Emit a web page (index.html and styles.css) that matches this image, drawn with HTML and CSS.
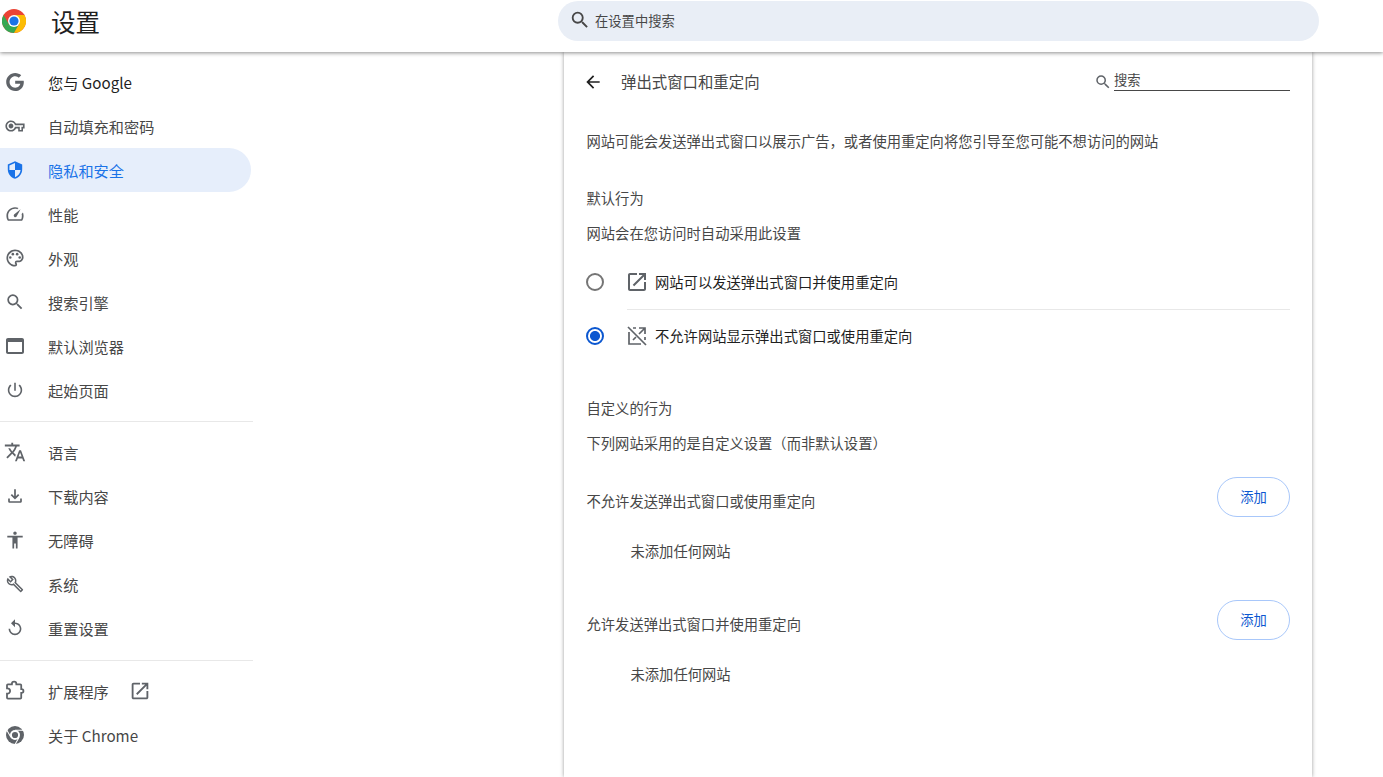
FILE: index.html
```html
<!DOCTYPE html>
<html lang="zh-CN">
<head>
  <meta charset="UTF-8" />
  <title>设置</title>
  <link rel="stylesheet" href="styles.css">
</head>
<body>
  <header class="topbar">
    <div class="brand">
      <svg class="chrome-logo" viewBox="0 0 24 24">
        <circle cx="12" cy="12" r="12" fill="#ea4335"/>
        <path d="M12 12 1.6 18A12 12 0 0 1 1.6 6l5.2 9z" fill="#34a853"/>
        <path d="M1.6 18 6.8 15 12 12l5.2 3-5.2 9A12 12 0 0 1 1.6 18z" fill="#34a853"/>
        <path d="M12 6h10.4A12 12 0 0 1 12 24l5.2-9z" fill="#fbbc04"/>
        <circle cx="12" cy="12" r="6" fill="#fff"/>
        <circle cx="12" cy="12" r="4.6" fill="#1a73e8"/>
      </svg>
      <h1>设置</h1>
    </div>
    <div class="search">
      <svg class="icon" viewBox="0 0 24 24"><path d="M15.5 14h-.79l-.28-.27A6.471 6.471 0 0 0 16 9.5 6.5 6.5 0 1 0 9.5 16c1.61 0 3.09-.59 4.23-1.57l.27.28v.79l5 4.99L20.49 19l-4.99-5zm-6 0C7.01 14 5 11.99 5 9.5S7.01 5 9.5 5 14 7.01 14 9.5 11.99 14 9.5 14z"/></svg>
      <span>在设置中搜索</span>
    </div>
  </header>

  <div class="layout">
    <nav class="sidebar">
      <a class="nav-item strong">
        <svg class="icon" viewBox="-4 -4 32 32"><path d="M12.24 10.285V14.4h6.806c-.275 1.765-2.056 5.174-6.806 5.174-4.095 0-7.439-3.389-7.439-7.574s3.345-7.574 7.439-7.574c2.33 0 3.891.989 4.785 1.849l3.254-3.138C18.189 1.186 15.479 0 12.24 0c-6.635 0-12 5.365-12 12s5.365 12 12 12c6.926 0 11.52-4.869 11.52-11.726 0-.788-.085-1.39-.189-1.989H12.24z"/></svg>
        <span>您与 Google</span>
      </a>
      <a class="nav-item">
        <svg class="icon" viewBox="-3 -3 30 30"><path d="M22 19h-6v-4h-2.68c-1.14 2.42-3.6 4-6.32 4-3.86 0-7-3.14-7-7s3.14-7 7-7c2.72 0 5.17 1.58 6.32 4H24v6h-2v4zm-4-2h2v-4h2v-2H11.94l-.23-.67C11.01 8.34 9.11 7 7 7c-2.76 0-5 2.24-5 5s2.24 5 5 5c2.11 0 4.01-1.34 4.71-3.33l.23-.67H18v4zM7 15c-1.65 0-3-1.35-3-3s1.35-3 3-3 3 1.35 3 3-1.35 3-3 3z"/></svg>
        <span>自动填充和密码</span>
      </a>
      <a class="nav-item active">
        <svg class="icon" viewBox="-3 -3 30 30"><path d="M12 1 3 5v6c0 5.55 3.84 10.74 9 12 5.16-1.26 9-6.45 9-12V5l-9-4zm0 10.99h7c-.53 4.12-3.28 7.79-7 8.94V12H5V6.3l7-3.11v8.8z"/></svg>
        <span>隐私和安全</span>
      </a>
      <a class="nav-item">
        <svg class="icon" viewBox="-2 -2 28 28"><path d="M12 4C6.500 4 2 8.500 2 14c0 1.500.3 3.300.9 4.500l.8 1.500h16.600l.8-1.500c.6-1.200.9-3 .9-4.500 0-1.300-.3-2.600-.7-3.700l-1.600 1.600c.2.700.3 1.400.3 2.100 0 1.300-.2 2.500-.7 4H4.700c-.5-1.500-.7-2.700-.7-4 0-4.400 3.600-8 8-8 .9 0 1.800.2 2.600.5l1.500-1.500C15 4.300 13.500 4 12 4zm6.500 2.500-7.600 6a2 2 0 0 0 2.800 2.800l4.800-8.800z"/></svg>
        <span>性能</span>
      </a>
      <a class="nav-item">
        <svg class="icon" viewBox="-2 -2 28 28"><path d="M12 22C6.490 22 2 17.510 2 12S6.490 2 12 2s10 4.040 10 9c0 3.310-2.690 6-6 6h-1.770c-.28 0-.5.22-.5.5 0 .12.05.23.13.33.41.47.64 1.060.64 1.670A2.500 2.500 0 0 1 12 22zm0-18c-4.410 0-8 3.590-8 8s3.590 8 8 8c.28 0 .5-.22.5-.5a.54.54 0 0 0-.14-.35c-.41-.46-.63-1.050-.63-1.650a2.500 2.500 0 0 1 2.500-2.500H16c2.210 0 4-1.790 4-4 0-3.860-3.590-7-8-7z"/><circle cx="6.500" cy="11.500" r="1.500"/><circle cx="9.500" cy="7.500" r="1.500"/><circle cx="14.500" cy="7.500" r="1.500"/><circle cx="17.500" cy="11.500" r="1.500"/></svg>
        <span>外观</span>
      </a>
      <a class="nav-item">
        <svg class="icon" viewBox="-2 -2 28 28"><path d="M15.5 14h-.79l-.28-.27A6.471 6.471 0 0 0 16 9.5 6.5 6.5 0 1 0 9.5 16c1.61 0 3.09-.59 4.23-1.57l.27.28v.79l5 4.99L20.49 19l-4.99-5zm-6 0C7.01 14 5 11.99 5 9.5S7.01 5 9.5 5 14 7.01 14 9.5 11.99 14 9.5 14z"/></svg>
        <span>搜索引擎</span>
      </a>
      <a class="nav-item">
        <svg class="icon" viewBox="0 0 24 24"><path d="M19 4H5c-1.110 0-2 .9-2 2v12c0 1.100.89 2 2 2h14c1.100 0 2-.9 2-2V6c0-1.100-.89-2-2-2zm0 14H5V8h14v10z"/></svg>
        <span>默认浏览器</span>
      </a>
      <a class="nav-item">
        <svg class="icon" viewBox="-3 -3 30 30"><path d="M13 3h-2v10h2V3zm4.830 2.170-1.420 1.420C17.990 7.860 19 9.810 19 12c0 3.870-3.130 7-7 7s-7-3.130-7-7c0-2.190 1.010-4.140 2.580-5.420L6.170 5.170C4.230 6.820 3 9.260 3 12c0 4.970 4.030 9 9 9s9-4.030 9-9c0-2.740-1.230-5.180-3.170-6.830z"/></svg>
        <span>起始页面</span>
      </a>
      <hr class="nav-sep">
      <a class="nav-item">
        <svg class="icon" viewBox="-1 -1 26 26"><path d="m12.870 15.070-2.540-2.510.03-.03c1.740-1.940 2.980-4.170 3.710-6.530H17V4h-7V2H8v2H1v1.990h11.170C11.500 7.920 10.440 9.750 9 11.350 8.070 10.320 7.300 9.190 6.690 8h-2c.73 1.630 1.730 3.170 2.980 4.560l-5.090 5.020L4 19l5-5 3.110 3.110.76-2.040zM18.500 10h-2L12 22h2l1.120-3h4.750L21 22h2l-4.500-12zm-2.620 7 1.620-4.330L19.120 17h-3.240z"/></svg>
        <span>语言</span>
      </a>
      <a class="nav-item">
        <svg class="icon" viewBox="-2 -2 28 28"><path d="M18 15v3H6v-3H4v3c0 1.100.9 2 2 2h12c1.100 0 2-.9 2-2v-3h-2zm-1-4-1.410-1.410L13 12.170V4h-2v8.170L8.410 9.590 7 11l5 5 5-5z"/></svg>
        <span>下载内容</span>
      </a>
      <a class="nav-item">
        <svg class="icon" viewBox="-2 -2 28 28"><path d="M12 2c1.100 0 2 .9 2 2s-.9 2-2 2-2-.9-2-2 .9-2 2-2zm9 7h-6v13h-2v-6h-2v6H9V9H3V7h18v2z"/></svg>
        <span>无障碍</span>
      </a>
      <a class="nav-item">
        <svg class="icon" viewBox="-4 -4 32 32"><path d="m22.610 18.990-9.080-9.080c.93-2.340.45-5.100-1.440-7C9.790.61 6.210.4 3.660 2.250L7.500 6.100 6.080 7.500 2.250 3.690C.39 6.230.6 9.820 2.900 12.110c1.860 1.860 4.570 2.350 6.890 1.480l9.110 9.110c.39.39 1.020.39 1.410 0l2.300-2.300c.4-.38.4-1.010 0-1.410zm-3 1.600-9.460-9.460c-.61.45-1.290.72-2 .82-1.360.2-2.790-.21-3.830-1.250C3.370 9.760 2.930 8.500 3 7.260l3.090 3.090 4.240-4.240-3.090-3.090c1.240-.07 2.490.37 3.440 1.310 1.080 1.080 1.490 2.570 1.240 3.960-.12.71-.42 1.370-.88 1.960l9.450 9.450-.88.890z"/></svg>
        <span>系统</span>
      </a>
      <a class="nav-item">
        <svg class="icon" viewBox="-3 -3 30 30"><path d="M12 5V1L7 6l5 5V7c3.310 0 6 2.690 6 6s-2.690 6-6 6-6-2.690-6-6H4c0 4.420 3.580 8 8 8s8-3.580 8-8-3.580-8-8-8z"/></svg>
        <span>重置设置</span>
      </a>
      <hr class="nav-sep low">
      <a class="nav-item">
        <svg class="icon" viewBox="-1.500 -1 27 27"><path class="outline" d="M8.500 5V4.500a2.500 2.500 0 0 1 5 0V5H18a1 1 0 0 1 1 1v4.500h.5a2 2 0 0 1 0 4H19V20a1 1 0 0 1-1 1H4a1 1 0 0 1-1-1v-4.500h.5a3 3 0 0 0 0-6H3V6a1 1 0 0 1 1-1z"/></svg>
        <span>扩展程序</span>
        <svg class="icon external" viewBox="-1 -1 26 26"><path d="M19 19H5V5h7V3H5c-1.110 0-2 .89-2 2v14c0 1.100.89 2 2 2h14c1.100 0 2-.9 2-2v-7h-2v7zM14 3v2h3.590l-9.830 9.830 1.410 1.410L19 6.410V10h2V3h-7z"/></svg>
      </a>
      <a class="nav-item">
        <svg class="icon" viewBox="-2 -2 28 28"><circle cx="12" cy="12" r="10.500"/><circle cx="12" cy="12" r="5.800" fill="#fff"/><circle cx="12" cy="12" r="3.600"/><path class="cut" d="M12 6.500h9.500M7.200 14.700 2.500 6.500M16.800 14.700 12 23"/></svg>
        <span>关于 Chrome</span>
      </a>
    </nav>

    <main class="card">
      <div class="sub-head">
        <svg class="back" viewBox="0 0 24 24"><path d="M20 11H7.830l5.590-5.590L12 4l-8 8 8 8 1.410-1.410L7.830 13H20v-2z"/></svg>
        <h2>弹出式窗口和重定向</h2>
        <div class="sub-search">
          <svg class="icon" viewBox="0 0 24 24"><path d="M15.500 14h-.79l-.28-.27A6.471 6.471 0 0 0 16 9.500 6.500 6.500 0 1 0 9.500 16c1.610 0 3.090-.59 4.230-1.570l.27.28v.79l5 4.990L20.490 19l-4.990-5zm-6 0C7.010 14 5 11.990 5 9.500S7.010 5 9.500 5 14 7.010 14 9.500 11.990 14 9.500 14z"/></svg>
          <div class="sub-input">搜索</div>
        </div>
      </div>

      <p class="desc">网站可能会发送弹出式窗口以展示广告，或者使用重定向将您引导至您可能不想访问的网站</p>

      <div class="line section-top">默认行为</div>
      <div class="line">网站会在您访问时自动采用此设置</div>

      <div class="radios">
        <label class="radio-row divided">
          <span class="radio"></span>
          <svg class="icon" viewBox="0 0 24 24"><path d="M19 19H5V5h7V3H5c-1.110 0-2 .89-2 2v14c0 1.100.89 2 2 2h14c1.100 0 2-.9 2-2v-7h-2v7zM14 3v2h3.590l-9.830 9.830 1.410 1.410L19 6.410V10h2V3h-7z"/></svg>
          <span class="radio-text">网站可以发送弹出式窗口并使用重定向</span>
        </label>
        <label class="radio-row">
          <span class="radio checked"></span>
          <svg class="icon" viewBox="0 0 24 24"><path class="blocked" d="M3 3l18 18M4 8v12h12M20 13v3M8 4h3M14 4h6v6M20 4l-6 6M11 13l-3 3"/></svg>
          <span class="radio-text">不允许网站显示弹出式窗口或使用重定向</span>
        </label>
      </div>

      <div class="line custom-top">自定义的行为</div>
      <div class="line">下列网站采用的是自定义设置（而非默认设置）</div>

      <div class="list-head first">
        <span>不允许发送弹出式窗口或使用重定向</span>
        <button class="add-btn">添加</button>
      </div>
      <div class="empty">未添加任何网站</div>

      <div class="list-head">
        <span>允许发送弹出式窗口并使用重定向</span>
        <button class="add-btn">添加</button>
      </div>
      <div class="empty">未添加任何网站</div>
    </main>
  </div>
</body>
</html>
```

FILE: styles.css
```css
* {
  box-sizing: border-box;
  margin: 0;
  padding: 0;
}

html, body {
  height: 100%;
  overflow: hidden;
  background: #fff;
  color: #474747;
  font-family: "Noto Sans CJK SC", "Noto Sans", sans-serif;
}

.icon {
  width: 24px;
  height: 24px;
  flex: none;
  fill: #5f6368;
}

.topbar {
  position: relative;
  z-index: 2;
  height: 52px;
  display: flex;
  align-items: flex-start;
  background: #fff;
  box-shadow: 0 1px 4px rgba(0, 0, 0, 0.45);
}

.brand {
  width: 558px;
  display: flex;
  align-items: center;
  height: 42px;
  padding-left: 2px;
}

.chrome-logo {
  width: 24px;
  height: 24px;
}

h1 {
  margin-left: 25px;
  font-size: 24.5px;
  font-weight: 400;
  color: #1f1f1f;
}

.search {
  width: 761px;
  height: 40px;
  margin-top: 1px;
  padding: 0 0 2px 11px;
  display: flex;
  align-items: center;
  gap: 4px;
  border-radius: 20px;
  background: #e9eef6;
  font-size: 13.3px;
}

.search .icon {
  width: 22px;
  height: 22px;
  fill: #474747;
}

.layout {
  display: flex;
  height: calc(100% - 52px);
}

.sidebar {
  width: 253px;
  flex: none;
  padding-top: 8px;
}

.nav-item {
  height: 44px;
  display: flex;
  align-items: center;
  width: 251px;
  padding-left: 3px;
  font-size: 15.2px;
  border-radius: 0 22px 22px 0;
}

.nav-item > span {
  margin-left: 21px;
}

.nav-item .icon {
  margin-top: -1px;
}

.nav-item.strong {
  color: #1f1f1f;
}

.nav-item.active {
  background: #e6eefb;
  color: #1a73e8;
}

.nav-item.active .icon {
  fill: #1a73e8;
}

.nav-item .external {
  margin-left: 19px;
}

.outline {
  fill: none;
  stroke: #5f6368;
  stroke-width: 2;
}

.blocked {
  fill: none;
  stroke: #5f6368;
  stroke-width: 1.7;
}

.cut {
  fill: none;
  stroke: #fff;
  stroke-width: 1.2;
}

.nav-sep {
  border: 0;
  border-top: 1px solid #e8e8e8;
  margin: 9px 0 8px;
}

.nav-sep.low {
  margin-top: 10px;
}

.card {
  width: 748px;
  margin-left: 311px;
  padding: 0 22px;
  background: #fff;
  box-shadow: 0 0 4px rgba(0, 0, 0, 0.4);
  font-size: 14.3px;
}

.sub-head {
  height: 60px;
  display: flex;
  align-items: center;
}

.back {
  width: 20px;
  height: 20px;
  margin-left: -3px;
  fill: #1f1f1f;
}

h2 {
  margin-left: 18px;
  padding-bottom: 2px;
  font-size: 15.4px;
  font-weight: 400;
}

.sub-search {
  margin-left: auto;
  display: flex;
  align-items: center;
  gap: 2px;
}

.sub-search .icon {
  width: 18px;
  height: 18px;
}

.sub-input {
  width: 176px;
  height: 20px;
  line-height: 17px;
  font-size: 13.3px;
  border-bottom: 1px solid #474747;
  margin-top: -2px;
}

.desc {
  height: 60px;
  line-height: 58px;
  padding-left: 0.5px;
}

.line {
  height: 34px;
  line-height: 32px;
  padding-left: 0.5px;
}

.section-top {
  margin-top: 10px;
  margin-bottom: 1px;
}

.radios {
  margin-top: 4px;
}

.radio-row {
  height: 54px;
  display: flex;
  align-items: center;
  color: #1f1f1f;
  position: relative;
}

.radio-row .icon {
  margin-left: 21px;
  margin-right: 6px;
}

.radio-text {
  padding-bottom: 2px;
}

.radio-row.divided::after {
  content: '';
  position: absolute;
  left: 41px;
  right: 0;
  bottom: -1px;
  height: 1px;
  background: #e8e8e8;
}

.radio {
  width: 18px;
  height: 18px;
  flex: none;
  border: 2px solid #757575;
  border-radius: 50%;
}

.radio.checked {
  border-color: #0b57d0;
  background: radial-gradient(circle, #0b57d0 0 4.6px, #fff 5.4px);
}

.custom-top {
  margin-top: 29px;
  margin-bottom: 1px;
}

.list-head {
  display: flex;
  justify-content: space-between;
  align-items: center;
  margin-top: 28px;
}

.list-head.first {
  margin-top: 16px;
}

.list-head span {
  padding: 6px 0 0 0.5px;
}

.add-btn {
  width: 73px;
  height: 40px;
  padding-bottom: 2px;
  background: #fff;
  border: 1px solid #a8c7fa;
  border-radius: 20px;
  color: #0b57d0;
  font: inherit;
  font-size: 13.3px;
}

.empty {
  height: 40px;
  line-height: 38px;
  margin-top: 15px;
  padding-left: 44.5px;
}
```
